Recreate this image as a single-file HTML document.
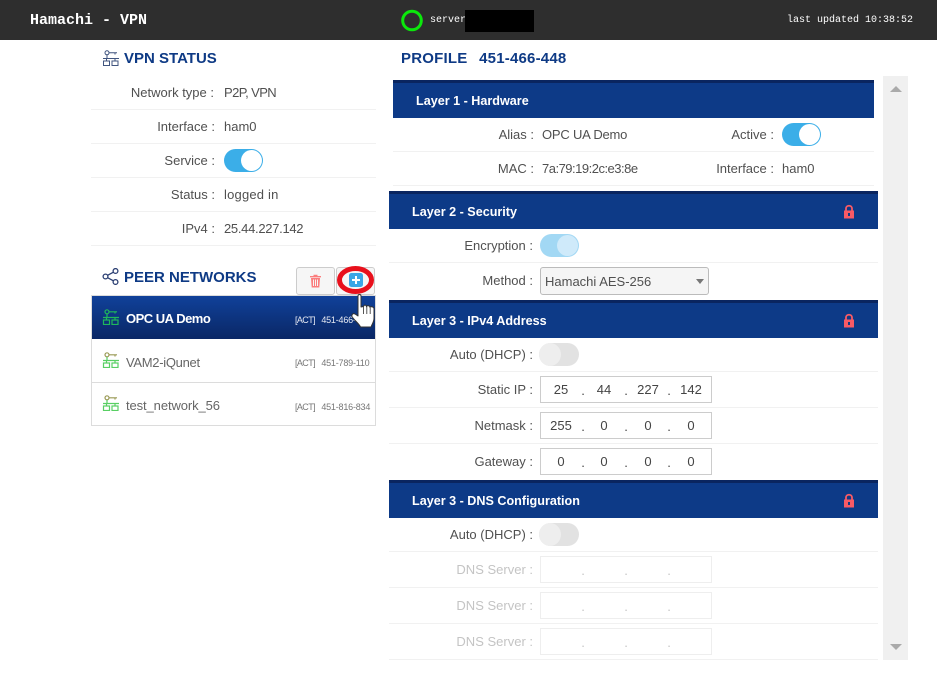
<!DOCTYPE html>
<html><head><meta charset="utf-8"><style>
html,body{margin:0;padding:0;background:#fff}
#p{position:relative;width:937px;height:685px;overflow:hidden;background:#fff;font:13px "Liberation Sans",sans-serif;color:#505050}
#p div,#p svg{position:absolute}
.m{font-family:"Liberation Mono",monospace;color:#fff;white-space:nowrap}
.h{font-size:15px;font-weight:bold;color:#0e3a85;line-height:20px;white-space:nowrap}
.l{text-align:right;white-space:nowrap;line-height:18px;height:18px;color:#505050}
.v{white-space:nowrap;line-height:18px;height:18px;color:#505050}
.s{height:1px;background:#f1f1f1}
.b{background:#0d3a87;border-top:3px solid #0a255f;color:#fff;font-weight:bold;font-size:12.6px;line-height:37px;box-sizing:border-box;height:38px;overflow:hidden;white-space:nowrap}
.t{width:39px;height:23px;border-radius:12px;box-sizing:border-box}
.t i{position:absolute;top:1px;width:21px;height:21px;border-radius:50%;display:block}
.on{background:#3baee8}.on i{right:1px;background:#fff}
.dim{background:#a2d8f4}.dim i{right:1px;background:#cfeafa}
.off{background:#e2e2e2;width:40px}.off i{left:0;width:22px;top:0;height:23px;background:#eee}
.ip{left:540px;width:172px;height:27px;box-sizing:border-box;border:1px solid #ccc;background:#fff}
.n{width:40px;text-align:center;line-height:18px;color:#444;font-size:13px}
.d{color:#444;line-height:18px;font-size:13px;width:6px;text-align:center}
.dis{border-color:#eee}
.gl{color:#c4c4c4}
.r{font-size:9px;letter-spacing:-.2px;white-space:nowrap;line-height:12px;color:#777}
.r span{letter-spacing:-.6px;margin-right:4px}
.it{left:126px;line-height:18px;white-space:nowrap;color:#666;font-size:13px}
</style></head><body><div id="p">
<div style="left:0;top:0;width:937px;height:40px;background:#2e2e2e"></div>
<div class="m" style="left:30px;top:12px;font-size:15px;font-weight:bold;line-height:17px">Hamachi - VPN</div>
<svg style="left:401px;top:9px" width="22" height="23"><circle cx="11" cy="11.500" r="9.300" fill="none" stroke="#0be80b" stroke-width="3"/></svg>
<div class="m" style="left:430px;top:14px;font-size:10px;line-height:13px">server</div>
<div style="left:465px;top:10px;width:69px;height:22px;background:#000"></div>
<div class="m" style="left:787px;top:14px;font-size:10px;line-height:13px">last updated 10:38:52</div>

<svg style="left:102px;top:50px" width="18" height="16" fill="none" stroke="#40557f" stroke-width="1"><circle cx="5" cy="2.800" r="2"/><path d="M7 2.800H15M13 2.800V4.500M5 5V8.500M1 8.500H17M4.500 8.500V11M13 8.500V11"/><rect x="1.500" y="11" width="6" height="4.500"/><rect x="10" y="11" width="6" height="4.500"/></svg>
<div class="h" style="left:124px;top:49px">VPN STATUS</div>

<div class="l" style="left:91px;width:123px;top:84px">Network type :</div><div class="v" style="left:224px;top:84px;letter-spacing:-.6px">P2P, VPN</div>
<div class="s" style="left:91px;width:285px;top:109px"></div>
<div class="l" style="left:91px;width:124px;top:118px">Interface :</div><div class="v" style="left:224px;top:118px">ham0</div>
<div class="s" style="left:91px;width:285px;top:143px"></div>
<div class="l" style="left:91px;width:124px;top:152px">Service :</div>
<div class="t on" style="left:224px;top:149px"><i></i></div>
<div class="s" style="left:91px;width:285px;top:177px"></div>
<div class="l" style="left:91px;width:124px;top:186px">Status :</div><div class="v" style="left:224px;top:186px;letter-spacing:.2px">logged in</div>
<div class="s" style="left:91px;width:285px;top:211px"></div>
<div class="l" style="left:91px;width:124px;top:220px">IPv4 :</div><div class="v" style="left:224px;top:220px;letter-spacing:-.3px">25.44.227.142</div>
<div class="s" style="left:91px;width:285px;top:245px"></div>

<svg style="left:102px;top:268px" width="17" height="17" fill="none" stroke="#2b3f73" stroke-width="1.300"><circle cx="3.500" cy="8.500" r="2.400"/><circle cx="13.500" cy="3" r="2.400"/><circle cx="13.500" cy="14" r="2.400"/><path d="M5.600 7.300L11.400 4.200M5.600 9.700L11.400 12.800"/></svg>
<div class="h" style="left:124px;top:268px">PEER NETWORKS</div>

<div style="left:296px;top:267px;width:39px;height:28px;box-sizing:border-box;border:1px solid #ccc;border-radius:3px;background:#f6f6f6"></div>
<div style="left:336px;top:267px;width:39px;height:28px;box-sizing:border-box;border:1px solid #ccc;border-radius:3px;background:#f6f6f6"></div>
<svg style="left:309px;top:274px" width="13" height="14" fill="#fb7d7d"><path d="M1 2H4.500V.800H8.500V2H12V3.400H1Z"/><path d="M2 4H11L10.300 13.500H2.700ZM4 5.500V12H5V5.500ZM6 5.500V12H7V5.500ZM8 5.500V12H9V5.500Z" fill-rule="evenodd"/></svg>
<svg style="left:349px;top:273px" width="14" height="14"><rect width="14" height="14" rx="2.500" fill="#3aa6e6"/><path d="M7 3V11M3 7H11" stroke="#fff" stroke-width="2"/></svg>

<div style="left:91px;top:295px;width:285px;height:131px;box-sizing:border-box;border:1px solid #dcdcdc"></div>
<div style="left:92px;top:296px;width:283px;height:43px;background:linear-gradient(#10419a,#0a2765)"></div>
<div class="s" style="left:92px;top:382px;width:283px;background:#dcdcdc"></div>

<svg style="left:102px;top:309px" width="18" height="16" fill="none" stroke="#1fb85a" stroke-width="1.200"><circle cx="5" cy="2.800" r="2"/><path d="M7 2.800H15M13 2.800V4.500M5 5V8.500M1 8.500H17M4.500 8.500V11M13 8.500V11"/><rect x="1.500" y="11" width="6" height="4.500"/><rect x="10" y="11" width="6" height="4.500"/></svg>
<div class="it" style="top:310px;color:#fff;font-weight:bold;letter-spacing:-.5px">OPC UA Demo</div>
<div class="r" style="left:295px;top:314px;color:#e6e9f2"><span>[ACT]</span> 451-466-448</div>

<svg style="left:102px;top:352px" width="18" height="16" fill="none" stroke="#58cf63" stroke-width="1.200"><circle cx="5" cy="2.800" r="2" stroke="#9a9a55"/><path d="M7 2.800H15M13 2.800V4.500" stroke="#9a9a55"/><path d="M5 5V8.500M1 8.500H17M4.500 8.500V11M13 8.500V11"/><rect x="1.500" y="11" width="6" height="4.500"/><rect x="10" y="11" width="6" height="4.500"/></svg>
<div class="it" style="top:354px;letter-spacing:-.3px">VAM2-iQunet</div>
<div class="r" style="left:295px;top:357px"><span>[ACT]</span> 451-789-110</div>

<svg style="left:102px;top:395px" width="18" height="16" fill="none" stroke="#58cf63" stroke-width="1.200"><circle cx="5" cy="2.800" r="2" stroke="#9a9a55"/><path d="M7 2.800H15M13 2.800V4.500" stroke="#9a9a55"/><path d="M5 5V8.500M1 8.500H17M4.500 8.500V11M13 8.500V11"/><rect x="1.500" y="11" width="6" height="4.500"/><rect x="10" y="11" width="6" height="4.500"/></svg>
<div class="it" style="top:397px;letter-spacing:-.1px">test_network_56</div>
<div class="r" style="left:295px;top:401px"><span>[ACT]</span> 451-816-834</div>

<svg style="left:336px;top:265px" width="40" height="30"><ellipse cx="19.500" cy="15" rx="16" ry="11.500" fill="none" stroke="#e8101c" stroke-width="5"/></svg>
<svg style="left:350px;top:293px" width="28" height="36"><path d="M8 3C8 1 11 1 11 3V14L13.500 13.500C14 11.500 16.500 11.800 16.500 13.800C17 12.200 20 12.500 20 14.500C20.800 13.200 24 13.800 24 15.800V25C24 29 22 31 21 34H10.500C9.500 31 3 26 2 23.500C1.500 21.500 3 20 5 21L8 23Z" fill="#fff" stroke="#333" stroke-width="1" stroke-linejoin="round"/><path d="M13.500 14V21M16.800 14V21M20.200 15V21" stroke="#444" stroke-width=".9"/></svg>

<div class="h" style="left:401px;top:49px;word-spacing:1.500px;letter-spacing:.2px">PROFILE&nbsp; 451-466-448</div>
<div style="left:883px;top:76px;width:25px;height:584px;background:#f0f0f0"></div>
<svg style="left:889px;top:85px" width="14" height="8"><path d="M1 7L7 1L13 7Z" fill="#aaa"/></svg>
<svg style="left:889px;top:643px" width="14" height="8"><path d="M1 1L7 7L13 1Z" fill="#aaa"/></svg>

<div class="b" style="left:393px;top:80px;width:481px;padding-left:23px">Layer 1 - Hardware</div>
<div class="l" style="left:393px;width:141px;top:126px">Alias :</div><div class="v" style="left:542px;top:126px;letter-spacing:-.2px">OPC UA Demo</div>
<div class="l" style="left:680px;width:94px;top:126px">Active :</div><div class="t on" style="left:782px;top:123px"><i></i></div>
<div class="s" style="left:393px;width:481px;top:151px"></div>
<div class="l" style="left:393px;width:141px;top:160px">MAC :</div><div class="v" style="left:542px;top:160px;letter-spacing:-.5px">7a:79:19:2c:e3:8e</div>
<div class="l" style="left:680px;width:94px;top:160px">Interface :</div><div class="v" style="left:782px;top:160px">ham0</div>
<div class="s" style="left:393px;width:481px;top:185px"></div>

<div class="b" style="left:389px;top:191px;width:489px;padding-left:23px">Layer 2 - Security</div>
<svg style="left:843px;top:204px" width="12" height="15"><path d="M3 7V4.500C3 .8 9 .8 9 4.500V7" fill="none" stroke="#f85a65" stroke-width="1.800"/><path d="M1 6.500H11V14.500H1ZM5 9V12H7V9Z" fill="#f85a65" fill-rule="evenodd"/></svg>
<div class="l" style="left:389px;width:144px;top:237px">Encryption :</div><div class="t dim" style="left:540px;top:234px"><i></i></div>
<div class="s" style="left:389px;width:489px;top:262px"></div>
<div class="l" style="left:389px;width:144px;top:272px">Method :</div>
<div style="left:540px;top:267px;width:169px;height:28px;box-sizing:border-box;border:1px solid #bbb;border-radius:3px;background:#f5f5f5;padding-left:4px;line-height:27px;color:#505050">Hamachi AES-256</div>
<svg style="left:695px;top:278px" width="10" height="7"><path d="M1 1H9L5 6Z" fill="#777"/></svg>

<div class="b" style="left:389px;top:300px;width:489px;padding-left:23px">Layer 3 - IPv4 Address</div>
<svg style="left:843px;top:313px" width="12" height="15"><path d="M3 7V4.500C3 .8 9 .8 9 4.500V7" fill="none" stroke="#f85a65" stroke-width="1.800"/><path d="M1 6.500H11V14.500H1ZM5 9V12H7V9Z" fill="#f85a65" fill-rule="evenodd"/></svg>
<div class="l" style="left:389px;width:144px;top:346px">Auto (DHCP) :</div><div class="t off" style="left:539px;top:343px"><i></i></div>
<div class="s" style="left:389px;width:489px;top:371px"></div>

<div class="l" style="left:389px;width:144px;top:381px">Static IP :</div>
<div class="ip" style="top:376px"></div>
<div class="n" style="left:541px;top:381px">25</div><div class="d" style="left:580px;top:382px">.</div><div class="n" style="left:584px;top:381px">44</div><div class="d" style="left:623px;top:382px">.</div><div class="n" style="left:628px;top:381px">227</div><div class="d" style="left:666px;top:382px">.</div><div class="n" style="left:671px;top:381px">142</div>
<div class="s" style="left:389px;width:489px;top:407px"></div>

<div class="l" style="left:389px;width:144px;top:417px">Netmask :</div>
<div class="ip" style="top:412px"></div>
<div class="n" style="left:541px;top:417px">255</div><div class="d" style="left:580px;top:418px">.</div><div class="n" style="left:584px;top:417px">0</div><div class="d" style="left:623px;top:418px">.</div><div class="n" style="left:628px;top:417px">0</div><div class="d" style="left:666px;top:418px">.</div><div class="n" style="left:671px;top:417px">0</div>
<div class="s" style="left:389px;width:489px;top:443px"></div>

<div class="l" style="left:389px;width:144px;top:453px">Gateway :</div>
<div class="ip" style="top:448px"></div>
<div class="n" style="left:541px;top:453px">0</div><div class="d" style="left:580px;top:454px">.</div><div class="n" style="left:584px;top:453px">0</div><div class="d" style="left:623px;top:454px">.</div><div class="n" style="left:628px;top:453px">0</div><div class="d" style="left:666px;top:454px">.</div><div class="n" style="left:671px;top:453px">0</div>

<div class="b" style="left:389px;top:480px;width:489px;padding-left:23px">Layer 3 - DNS Configuration</div>
<svg style="left:843px;top:493px" width="12" height="15"><path d="M3 7V4.500C3 .8 9 .8 9 4.500V7" fill="none" stroke="#f85a65" stroke-width="1.800"/><path d="M1 6.500H11V14.500H1ZM5 9V12H7V9Z" fill="#f85a65" fill-rule="evenodd"/></svg>
<div class="l" style="left:389px;width:144px;top:526px">Auto (DHCP) :</div><div class="t off" style="left:539px;top:523px"><i></i></div>
<div class="s" style="left:389px;width:489px;top:551px"></div>

<div class="l gl" style="left:389px;width:144px;top:561px">DNS Server :</div>
<div class="ip dis" style="top:556px"></div>
<div class="d gl" style="left:580px;top:562px">.</div><div class="d gl" style="left:623px;top:562px">.</div><div class="d gl" style="left:666px;top:562px">.</div>
<div class="s" style="left:389px;width:489px;top:587px"></div>

<div class="l gl" style="left:389px;width:144px;top:597px">DNS Server :</div>
<div class="ip dis" style="top:592px"></div>
<div class="d gl" style="left:580px;top:598px">.</div><div class="d gl" style="left:623px;top:598px">.</div><div class="d gl" style="left:666px;top:598px">.</div>
<div class="s" style="left:389px;width:489px;top:623px"></div>

<div class="l gl" style="left:389px;width:144px;top:633px">DNS Server :</div>
<div class="ip dis" style="top:628px"></div>
<div class="d gl" style="left:580px;top:634px">.</div><div class="d gl" style="left:623px;top:634px">.</div><div class="d gl" style="left:666px;top:634px">.</div>
<div class="s" style="left:389px;width:489px;top:659px"></div>
</div></body></html>
